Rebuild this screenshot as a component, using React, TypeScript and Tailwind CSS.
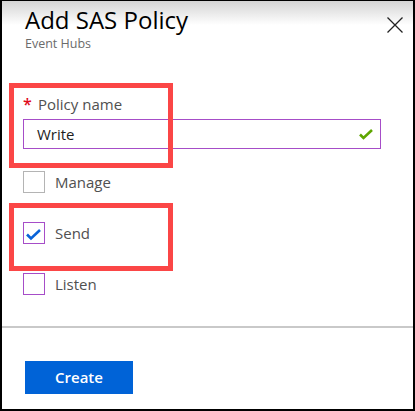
function Checkbox({ label, checked, tone }: { label: string; checked?: boolean; tone: 'grey' | 'purple' }) {
  return (
    <div className="flex items-center h-[22px] gap-[10px]">
      <div
        className={`w-[22px] h-[22px] border-[1.5px] bg-white flex items-center justify-center ${
          tone === 'grey' ? 'border-[#b4b4b4]' : 'border-[#a64dc8]'
        }`}
      >
        {checked && (
          <svg width="22" height="22" viewBox="0 0 22 22" className="shrink-0">
            <polyline points="4,12.5 8,16.5 17,8" fill="none" stroke="#0a63d8" strokeWidth="2.6" />
          </svg>
        )}
      </div>
      <span className="text-[15px] leading-[20px] text-[#505050]">{label}</span>
    </div>
  );
}

export default function App() {
  return (
    <div
      className="relative w-[415px] h-[411px] border-2 border-t border-black bg-white flex flex-col overflow-hidden"
      style={{ fontFamily: '"Open Sans", "Noto Sans", sans-serif' }}
    >
      {/* header */}
      <div className="bg-[linear-gradient(to_bottom,#d4d4d4_0px,#ffffff_24px)] pl-[23px] pr-[10px] pt-[5px] flex justify-between">
        <div>
          <h1 className="text-[24px] leading-[28px] font-medium text-black">Add SAS Policy</h1>
          <p className="text-[12.5px] leading-[16px] mt-[2px] text-[#6b6b6b]">Event Hubs</p>
        </div>
        <svg width="16" height="16" viewBox="0 0 16 16" className="mt-[11px]">
          <path d="M0.5 0.5 15.5 15.5 M15.5 0.5 0.5 15.5" stroke="#222" strokeWidth="1.3" fill="none" />
        </svg>
      </div>

      {/* form */}
      <div className="pl-[21px] pr-[32px] mt-[42px]">
        <label className="flex items-center h-[20px] text-[15px] leading-[20px] text-[#505050]">
          <span className="text-[#e00b1c] w-[15px] text-[16px] font-semibold">*</span>
          Policy name
        </label>
        <div className="mt-[5px] h-[30px] border-[1.5px] border-[#a64dc8] flex items-center justify-between pl-[13px] pr-[6px]">
          <span className="text-[15px] text-[#1e1e1e]">Write</span>
          <svg width="16" height="14" viewBox="0 0 16 14">
            <polyline points="2,7.5 5.5,11 14,3" fill="none" stroke="#5ea600" strokeWidth="2.6" />
          </svg>
        </div>

        <div className="mt-[22px] flex flex-col gap-[29px]">
          <Checkbox label="Manage" tone="grey" />
          <Checkbox label="Send" tone="purple" checked />
          <Checkbox label="Listen" tone="purple" />
        </div>
      </div>

      <div className="mt-[31px] h-[2px] bg-[#c9c9c9]" />

      <div className="pl-[23px] mt-[33px]">
        <button className="w-[108px] h-[33px] bg-[#0063d7] text-white text-[15px] font-semibold">Create</button>
      </div>

      {/* annotation boxes */}
      <div className="absolute left-[7px] top-[82px] w-[164px] h-[85px] border-[5px] border-[#fb4646]" />
      <div className="absolute left-[7px] top-[202px] w-[164px] h-[68px] border-[5px] border-[#fb4646]" />
    </div>
  );
}
